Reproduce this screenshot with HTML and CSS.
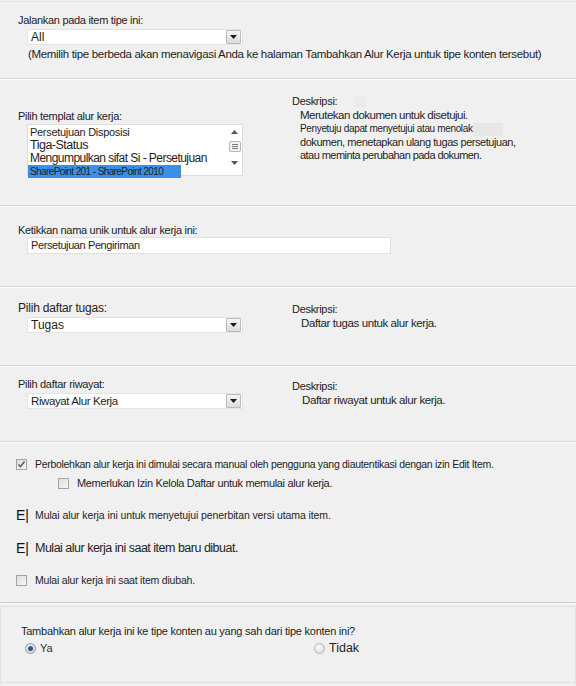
FILE: index.html
```html
<!DOCTYPE html>
<html lang="id">
<head>
<meta charset="utf-8">
<title>Tambahkan Alur Kerja</title>
<link rel="stylesheet" href="styles.css">
</head>
<body>
<div class="page">
  <section class="sec s1">
    <div class="lbl">Jalankan pada item tipe ini:</div>
    <div class="select w216">
      <span class="val val-all">All</span>
      <span class="arrow"><svg width="7" height="4" viewBox="0 0 7 4"><path d="M0 0h7L3.5 4z" fill="#1a1a1a"/></svg></span>
    </div>
    <div class="note">(Memilih tipe berbeda akan menavigasi Anda ke halaman Tambahkan Alur Kerja untuk tipe konten tersebut)</div>
  </section>

  <section class="sec s2 cols">
    <div class="left">
      <div class="lbl">Pilih templat alur kerja:</div>
      <div class="listbox">
        <div class="items">
          <div class="it it1">Persetujuan Disposisi</div>
          <div class="it it2">Tiga-Status</div>
          <div class="it it3">Mengumpulkan sifat Si - Persetujuan</div>
          <div class="it it4 sel">SharePoint 201 - SharePoint 2010</div>
        </div>
        <div class="sbar">
          <svg class="sb-up" width="7" height="4" viewBox="0 0 7 4"><path d="M3.5 0L7 4H0z" fill="#555"/></svg>
          <span class="thumb"><i></i><i></i><i></i></span>
          <svg class="sb-down" width="7" height="4" viewBox="0 0 7 4"><path d="M0 0h7L3.5 4z" fill="#555"/></svg>
        </div>
      </div>
    </div>
    <div class="right">
      <div class="dlbl">Deskripsi:<span class="ghost g1"></span></div>
      <div class="desc">
        <div class="d1">Merutekan dokumen untuk disetujui.</div>
        <div class="d2">Penyetuju dapat menyetujui atau menolak<span class="ghost g2"></span></div>
        <div class="d3">dokumen, menetapkan ulang tugas persetujuan,</div>
        <div class="d4">atau meminta perubahan pada dokumen.</div>
      </div>
    </div>
  </section>

  <section class="sec s3">
    <div class="lbl">Ketikkan nama unik untuk alur kerja ini:</div>
    <div class="input">Persetujuan Pengiriman</div>
  </section>

  <section class="sec s4 cols">
    <div class="left">
      <div class="lbl lbl-big">Pilih daftar tugas:</div>
      <div class="select w216">
        <span class="val val-tugas">Tugas</span>
        <span class="arrow"><svg width="7" height="4" viewBox="0 0 7 4"><path d="M0 0h7L3.5 4z" fill="#1a1a1a"/></svg></span>
      </div>
    </div>
    <div class="right">
      <div class="dlbl">Deskripsi:</div>
      <div class="dtext">Daftar tugas untuk alur kerja.</div>
    </div>
  </section>

  <section class="sec s5 cols">
    <div class="left">
      <div class="lbl">Pilih daftar riwayat:</div>
      <div class="select w216">
        <span class="val val-riw">Riwayat Alur Kerja</span>
        <span class="arrow"><svg width="7" height="4" viewBox="0 0 7 4"><path d="M0 0h7L3.5 4z" fill="#1a1a1a"/></svg></span>
      </div>
    </div>
    <div class="right">
      <div class="dlbl">Deskripsi:</div>
      <div class="dtext">Daftar riwayat untuk alur kerja.</div>
    </div>
  </section>

  <section class="sec s6">
    <div class="row r1">
      <span class="cb"><svg width="9" height="9" viewBox="0 0 9 9"><path d="M1.5 4.5l2 2.2L7.5 1.5" fill="none" stroke="#4a5a78" stroke-width="1.5"/></svg></span>
      <span class="t t1">Perbolehkan alur kerja ini dimulai secara manual oleh pengguna yang diautentikasi dengan izin Edit Item.</span>
    </div>
    <div class="row r2">
      <span class="cb"></span>
      <span class="t t2">Memerlukan Izin Kelola Daftar untuk memulai alur kerja.</span>
    </div>
    <div class="row r3">
      <span class="eg">E|</span>
      <span class="t t3">Mulai alur kerja ini untuk menyetujui penerbitan versi utama item.</span>
    </div>
    <div class="row r4">
      <span class="eg">E|</span>
      <span class="t t4">Mulai alur kerja ini saat item baru dibuat.</span>
    </div>
    <div class="row r5">
      <span class="cb"></span>
      <span class="t t5">Mulai alur kerja ini saat item diubah.</span>
    </div>
  </section>

  <section class="box">
    <div class="q">Tambahkan alur kerja ini ke tipe konten au yang sah dari tipe konten ini?</div>
    <div class="radios">
      <label class="rad rad-ya"><span class="rb on"></span><span class="rt rt-ya">Ya</span></label>
      <label class="rad rad-tidak"><span class="rb"></span><span class="rt rt-tidak">Tidak</span></label>
    </div>
  </section>
</div>
</body>
</html>
```

FILE: styles.css
```css
* { box-sizing: border-box; }
html, body { margin: 0; padding: 0; }
body {
  background: #f0f0f0;
  font-family: "Liberation Sans", Arial, sans-serif;
  font-size: 11px;
  color: #222;
  width: 576px;
  height: 686px;
  overflow: hidden;
}
.page { border-top: 1px solid #e2e2e2; margin-top: 1px; }

.sec {
  border-bottom: 1px solid #d8d8d8;
  box-shadow: 0 1px 0 #fafafa;
}
.cols { display: grid; grid-template-columns: 292px 1fr; }
.left { padding-left: 18px; }

.lbl { line-height: 14px; letter-spacing: -0.3px; }
.lbl-big { font-size: 12px; letter-spacing: -0.2px; }

.select {
  margin: 2px 0 0 9px;
  height: 16px;
  background: #fff;
  border: 1px solid #e4e4e4;
  display: flex;
  align-items: center;
  justify-content: space-between;
}
.w216 { width: 216px; }
.val { padding-left: 3px; font-size: 12px; color: #1e1e1e; line-height: 14px; }
.val-riw { background: #fff; font-size: 11.5px; letter-spacing: -0.4px; padding-right: 4px; }
.arrow {
  width: 15px; height: 14px;
  margin-right: 1px;
  border: 1px solid #b9b9b9;
  border-radius: 1px;
  background: linear-gradient(#f6f6f6, #dcdcdc);
  display: flex; align-items: center; justify-content: center;
}

/* section 1 */
.s1 { padding: 11px 0 17px 18px; }
.note { margin: 2px 0 0 10px; line-height: 14px; font-size: 11.5px; letter-spacing: -0.33px; color: #1e1e1e; white-space: nowrap; }

/* section 2 */
.s2 { height: 127px; }
.s2 .left { padding-top: 30px; }
.s2 .right { padding-top: 15px; }
.listbox {
  margin: 1px 0 0 9px;
  width: 216px; height: 52px;
  background: #fff;
  border: 1px solid #dcdcdc;
  display: flex;
}
.items { flex: 1; padding-top: 1px; }
.it { line-height: 13px; color: #1e1e1e; padding-left: 2px; white-space: nowrap; }
.it1 { font-size: 11px; letter-spacing: -0.3px; }
.it2 { font-size: 12.5px; letter-spacing: -0.5px; }
.it3 { font-size: 12px; letter-spacing: -0.55px; }
.it4 { font-size: 10px; letter-spacing: -0.6px; }
.sel { background: #3a8fe6; width: 153px; line-height: 13px; height: 13px; }
.sbar {
  width: 15px;
  display: flex; flex-direction: column; align-items: center;
  padding-top: 5px;
}
.thumb {
  margin-top: 7px;
  width: 12px; height: 11px;
  border: 1px solid #b5b5b5;
  border-radius: 2px;
  background: #f2f2f2;
  display: flex; flex-direction: column; align-items: center; justify-content: center; gap: 1px;
}
.thumb i { display: block; width: 6px; height: 1px; background: #7a7a7a; }
.sb-down { margin-top: 9px; }

.dlbl { line-height: 14px; letter-spacing: -0.3px; }
.ghost { display: inline-block; vertical-align: middle; background: #e7e7e7; }
.g1 { width: 10px; height: 11px; margin-left: 18px; background: #ebebeb; }
.g2 { width: 30px; height: 13px; margin-left: 0; }
.desc { padding-left: 8px; padding-top: 1px; }
.desc div { line-height: 13px; white-space: nowrap; color: #1e1e1e; }
.d1 { font-size: 11.5px; letter-spacing: -0.5px; }
.d2 { font-size: 10px; letter-spacing: -0.35px; }
.d3 { font-size: 11px; letter-spacing: -0.45px; }
.d4 { font-size: 11px; letter-spacing: -0.55px; }
.dtext { padding-left: 9px; line-height: 14px; font-size: 11.5px; letter-spacing: -0.4px; color: #1e1e1e; }

/* section 3 */
.s3 { padding: 17px 0 32px 18px; }
.input {
  margin: 0 0 0 9px;
  width: 364px; height: 17px;
  background: #fff;
  border: 1px solid #e0e0e0;
  padding-left: 3px;
  font-size: 11px; line-height: 15px; letter-spacing: -0.4px;
  color: #1e1e1e;
}

/* section 4 & 5 */
.s4 { height: 79px; }
.s4 .left { padding-top: 14px; }
.s4 .right { padding-top: 15px; }
.s5 { height: 76px; }
.s5 .left { padding-top: 11px; }
.s5 .right { padding-top: 13px; }
.s5 .dtext { padding-left: 10px; }

/* section 6 */
.s6 { padding: 15px 0 15px 16px; border-bottom-color: #cbcbcb; }
.row { display: flex; align-items: center; height: 14px; }
.r2 { margin-top: 5px; padding-left: 42px; }
.r3 { margin-top: 18px; }
.r4 { margin-top: 19px; }
.r5 { margin-top: 18px; }
.cb {
  width: 11px; height: 11px;
  border: 1px solid #a3a3a3;
  background: linear-gradient(135deg, #dcdcdc, #f7f7f7);
  display: flex; align-items: center; justify-content: center;
  margin-right: 8px;
  flex: none;
}
.eg { font-size: 14px; color: #111; width: 19px; line-height: 14px; }
.t { white-space: nowrap; color: #1e1e1e; }
.t1 { font-size: 10.5px; letter-spacing: -0.3px; }
.t2 { font-size: 11px; letter-spacing: -0.33px; }
.t3 { font-size: 10.5px; letter-spacing: -0.1px; }
.t4 { font-size: 12.5px; letter-spacing: -0.5px; }
.t5 { font-size: 10.5px; letter-spacing: -0.2px; }

/* bottom box */
.box {
  margin-top: 3px;
  height: 77px;
  border: 1px solid #e0e0e0;
  padding: 17px 0 0 20px;
}
.q { line-height: 14px; font-size: 11px; letter-spacing: -0.25px; color: #1e1e1e; }
.radios { display: flex; margin-top: 3px; padding-left: 4px; }
.rad { display: flex; align-items: center; height: 14px; }
.rad-ya { width: 289px; }
.rb {
  width: 11px; height: 11px; border-radius: 50%;
  border: 1px solid #b4b4b4;
  background: radial-gradient(circle at 40% 35%, #fafafa, #d8d8d8);
  margin-right: 4px;
  flex: none;
  display: flex; align-items: center; justify-content: center;
}
.rb.on { border-color: #8a9bb4; background: radial-gradient(circle at 40% 35%, #eef2f8, #c5cfdc); }
.rb.on::after { content: ""; width: 5px; height: 5px; border-radius: 50%; background: #3a5477; }
.rt-ya { font-size: 11px; color: #333; }
.rt-tidak { font-size: 12.5px; color: #1e1e1e; }
```
